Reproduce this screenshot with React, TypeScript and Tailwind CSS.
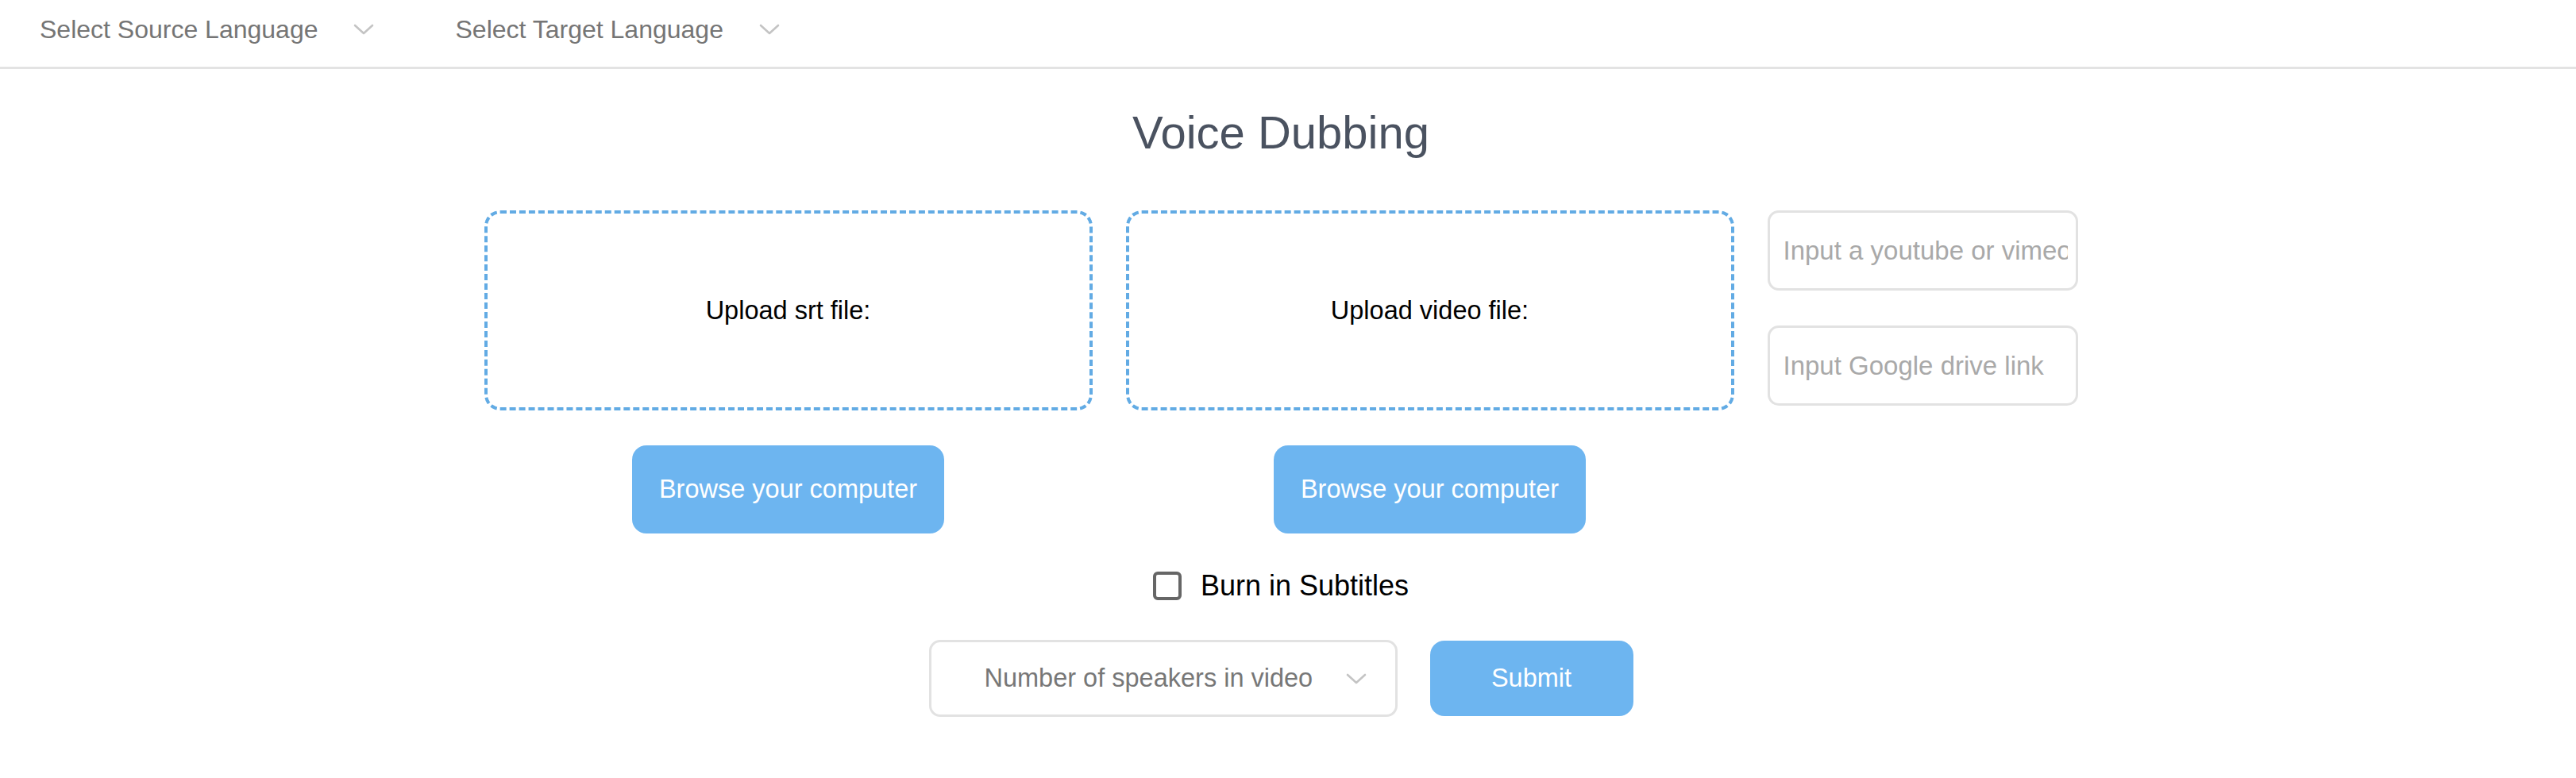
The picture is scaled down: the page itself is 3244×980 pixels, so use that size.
import React from 'react';

const font = { fontFamily: '"Liberation Sans", Arial, sans-serif' };

function Chevron({ className }: { className?: string }) {
  return (
    <svg viewBox="0 0 26 16" className={className} fill="none">
      <path d="M2 3 L13 13 L24 3" stroke="#c4c4c4" strokeWidth="2.6" strokeLinecap="round" strokeLinejoin="round" />
    </svg>
  );
}

function UploadBox({ label }: { label: string }) {
  return (
    <div className="flex flex-col items-center gap-[44px]">
      <div className="w-[766px] h-[252px] rounded-[20px] border-[4px] border-dashed border-[#62abe4] flex items-center justify-center">
        <span className="text-[32.5px] text-black">{label}</span>
      </div>
      <button className="w-[393px] h-[111px] rounded-[18px] bg-[#6db5f0] text-white text-[32.5px]">
        Browse your computer
      </button>
    </div>
  );
}

export default function App() {
  return (
    <div className="min-h-screen bg-white" style={font}>
      <header className="h-[87px] border-b-[3px] border-[#e3e3e3] flex items-start pt-[18px] pl-[50px]">
        <div className="flex items-center">
          <span className="text-[32px] leading-[38px] text-[#757575]">Select Source Language</span>
          <Chevron className="w-[26px] h-[16px] ml-[45px]" />
        </div>
        <div className="flex items-center ml-[102px]">
          <span className="text-[32px] leading-[38px] text-[#757575]">Select Target Language</span>
          <Chevron className="w-[26px] h-[16px] ml-[45px]" />
        </div>
      </header>

      <main className="flex flex-col items-center pr-[18px]">
        <h1 className="mt-[45px] text-[58px] leading-[70px] text-[#4a5260]">Voice Dubbing</h1>

        <div className="mt-[63px] flex items-start gap-[42px]">
          <UploadBox label="Upload srt file:" />
          <UploadBox label="Upload video file:" />
          <div className="flex flex-col gap-[44px] w-[391px]">
            <input
              placeholder="Input a youtube or vimeo link"
              className="w-full h-[101px] rounded-[14px] border-[3px] border-[#e2e2e2] pl-[17px] pr-[10px] text-[33px] placeholder:text-[#a9a9a9] outline-none"
              style={font}
            />
            <input
              placeholder="Input Google drive link"
              className="w-full h-[101px] rounded-[14px] border-[3px] border-[#e2e2e2] pl-[17px] pr-[10px] text-[33px] placeholder:text-[#a9a9a9] outline-none"
              style={font}
            />
          </div>
        </div>

        <label className="mt-[46px] flex items-center gap-[24px]">
          <span className="w-[36px] h-[36px] rounded-[6px] border-[4px] border-[#666666] bg-white" />
          <span className="text-[36px] leading-[40px] text-black">Burn in Subtitles</span>
        </label>

        <div className="mt-[48px] flex items-center gap-[41px]">
          <div className="w-[590px] h-[97px] rounded-[14px] border-[3px] border-[#e2e2e2] flex items-center pl-[67px] pr-[36px]">
            <span className="text-[32.5px] text-[#777777] flex-1">Number of speakers in video</span>
            <Chevron className="w-[26px] h-[16px]" />
          </div>
          <button className="w-[256px] h-[95px] rounded-[18px] bg-[#6db5f0] text-white text-[32.5px]">
            Submit
          </button>
        </div>
      </main>
    </div>
  );
}
